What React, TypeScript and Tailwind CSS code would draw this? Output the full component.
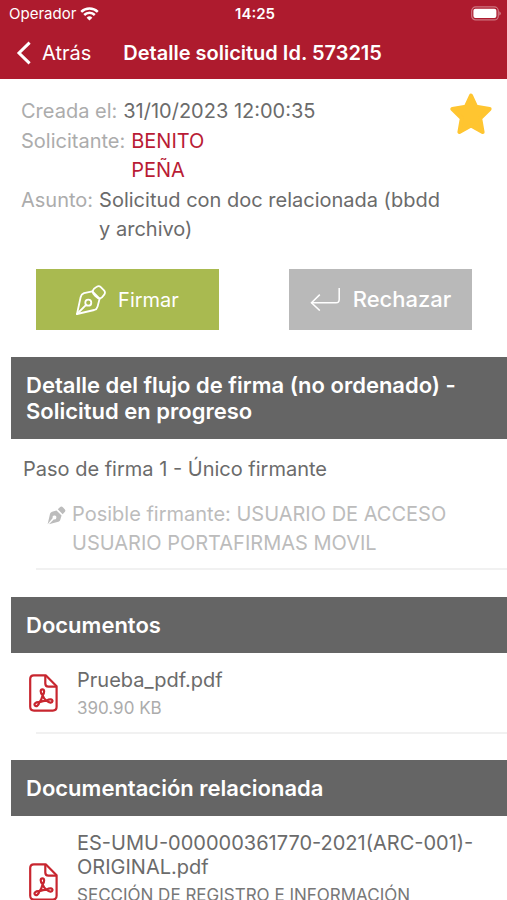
import type {ReactNode} from 'react';

const WifiIcon = () => (
  <svg width={19} height={14} viewBox="0 0 19 14" fill="none" stroke="currentColor" strokeWidth={2.5} aria-hidden="true">
    <path d="M1.2 4.9a11.8 11.8 0 0 1 16.6 0"/>
    <path d="M4.2 8a7.5 7.5 0 0 1 10.6 0"/>
    <path d="M9.5 13.6 6.6 10.7a4.1 4.1 0 0 1 5.8 0z" fill="currentColor" stroke="none"/>
  </svg>
);

const BatteryIcon = () => (
  <svg width={30} height={15} viewBox="0 0 30 15" fill="none" aria-hidden="true">
    <rect x={0.7} y={0.9} width={26.6} height={13} rx={4} stroke="#fff" strokeOpacity={0.4} strokeWidth={1.2}/>
    <rect x={2.4} y={2.7} width={23} height={9.4} rx={2} fill="#fff"/>
    <path d="M28.4 5.2a2.5 2.5 0 0 1 0 4.4z" fill="#fff" fillOpacity={0.5}/>
  </svg>
);

const BackIcon = () => (
  <svg width={16} height={24} viewBox="0 0 16 24" fill="none" stroke="currentColor" strokeWidth={3} aria-hidden="true">
    <path d="M13.6 1.6 3 12l10.6 10.4"/>
  </svg>
);

const StarIcon = () => (
  <svg width={42} height={42} viewBox="0 0 42 42" fill="#ffc530" stroke="#ffc530" strokeWidth={4} strokeLinejoin="round" aria-hidden="true">
    <path d="M21 2.6 26.2 13.8 39.6 16 30.2 25.3 32.6 39 21 32.6 9.4 39 11.8 25.3 2.4 16 15.8 13.8z"/>
  </svg>
);

const PenIcon = () => (
  <svg
    width={30}
    height={30}
    viewBox="0 0 30 30"
    fill="none"
    stroke="currentColor"
    strokeWidth={1.8}
    strokeLinejoin="round"
    strokeLinecap="round"
    aria-hidden="true"
  >
    <path d="M1 29 4.6 12.2C5 10.2 6.1 8.9 8 8.2L16.4 6.4 23.6 13.7 21.6 21.4C21.1 23.4 20.1 24.5 18.2 25z"/>
    <path d="M16.4 6.4C17 4.6 19 2.6 20.8 1.8C22.4.8 23.6 1 24.8 2.2L28 5.4C29.2 6.6 29.3 7.8 28.3 9.4C27.2 11.2 25.5 13 23.6 13.7C21 13.4 16.8 9.2 16.4 6.4z"/>
    <circle cx={12.3} cy={17.7} r={3}/>
    <path d="M1 29 10.1 19.9"/>
  </svg>
);

const PenSolidIcon = () => (
  <svg width={19} height={19} viewBox="0 0 30 30" fill="currentColor" aria-hidden="true">
    <path d="M1 29 4.6 13C5 11 6.1 9.7 8 9L15 7 23 15 21 21.6C20.5 23.4 19.5 24.4 17.8 25L3 29 11 21A3 3 0 1 0 9 19z"/>
    <path d="M17 5.3 20.4 2C21.8.6 23.6.6 25 2L28 5C29.4 6.4 29.4 8.2 28 9.6L24.7 13z"/>
  </svg>
);

const ReturnIcon = () => (
  <svg width={31} height={23} viewBox="0 0 31 23" fill="none" stroke="currentColor" strokeWidth={1.5} aria-hidden="true">
    <path d="M29.2 0V11.5C29.2 13.8 28.2 14.8 26 14.8H1.5"/>
    <path d="M9.8 6.6 1.5 14.8 9.8 22.6"/>
  </svg>
);

const PdfIcon = () => (
  <svg
    width={29}
    height={38}
    viewBox="0 0 29 38"
    fill="none"
    stroke="#c8262f"
    strokeWidth={2.2}
    strokeLinejoin="round"
    className="shrink-0"
    aria-hidden="true"
  >
    <path d="M4.8 1.3H16.7L27.6 12.2V32.8C27.6 35.4 26.4 36.6 23.8 36.6H5C2.4 36.6 1.2 35.4 1.2 32.8V5C1.2 2.4 2.4 1.3 4.8 1.3z"/>
    <path d="M16.3 1.3V9.6C16.3 11.7 17.3 12.7 19.4 12.7H27.6"/>
    <path d="M13.6 21.4C11 18.4 11.2 15.4 13.4 15.4C15.6 15.4 15.8 18.4 13.6 21.4C14.4 23.8 15.6 25.4 17.6 26.6C20.6 24.6 23.8 25 23.5 27.2C23.2 29.4 20.2 29 17.6 26.6C15 26.7 12.7 27.3 10.4 28.3C9.6 31.8 7.2 33 5.9 31.5C4.7 29.8 6.8 27.8 10.4 28.3C12 26.2 13 24 13.6 21.4z"/>
  </svg>
);

const SectionTitle = ({children}: {children: ReactNode}) => (
  <h2 className="ml-[11px] bg-[#656565] py-[15px] pr-9 pl-[15px] text-[22px] leading-[26px] font-semibold text-white">
    {children}
  </h2>
);

type DocumentItemProps = {
  name: string;
  detail: string;
  className?: string;
  detailClassName: string;
};

const DocumentItem = ({name, detail, className = '', detailClassName}: DocumentItemProps) => (
  <li>
    <a href="#documento" className={`flex items-center gap-[19px] pr-6 pl-[29px] ${className}`}>
      <PdfIcon/>
      <span className="flex min-w-0 flex-1 flex-col gap-1 self-start pt-[15px] pb-3 leading-6">
        <span>{name}</span>
        <span className={`text-[17px] leading-6 ${detailClassName}`}>{detail}</span>
      </span>
    </a>
  </li>
);

export default function App() {
  return (
    <div className="flex h-dvh flex-col overflow-hidden bg-white font-['Inter','Liberation_Sans',sans-serif] text-xl text-[#6b6b6b]">
      <header className="shrink-0 bg-[#ae1b2e] pb-px text-white">
        <div className="grid h-[27px] grid-cols-3 items-center pr-[6px] pl-[9px] text-[15px]">
          <div className="flex items-center gap-1">
            <span>Operador</span>
            <WifiIcon/>
          </div>
          <span className="text-center font-semibold">14:25</span>
          <div className="flex justify-end">
            <BatteryIcon/>
          </div>
        </div>
        <div className="flex h-[51px] items-center pl-4">
          <button type="button" className="flex items-center gap-[10px]">
            <BackIcon/>
            Atrás
          </button>
          <h1 className="ml-8 font-semibold whitespace-nowrap">Detalle solicitud Id. 573215</h1>
        </div>
      </header>

      <main className="min-h-0 flex-1 overflow-y-auto [scrollbar-width:none]">
        <div className="flex items-start justify-between pt-[14px] pr-[15px] pl-[21px]">
          <dl className="flex min-w-0 flex-1 flex-col gap-px pt-1 leading-[29px]">
            <div className="flex gap-[6px]">
              <dt className="text-[#acacac]">Creada el:</dt>
              <dd>31/10/2023 12:00:35</dd>
            </div>
            <div className="flex gap-[6px]">
              <dt className="text-[#acacac]">Solicitante:</dt>
              <dd className="w-24 text-[#b91c35]">BENITO PEÑA</dd>
            </div>
            <div className="flex gap-[6px]">
              <dt className="text-[#acacac]">Asunto:</dt>
              <dd>Solicitud con doc relacionada (bbdd y archivo)</dd>
            </div>
          </dl>
          <button type="button" aria-label="Favorita" className="shrink-0">
            <StarIcon/>
          </button>
        </div>

        <div className="mt-[25px] grid grid-cols-2 gap-[70px] pr-[35px] pl-9 text-white">
          <button type="button" className="flex h-[61px] items-center justify-center gap-3 bg-[#a9ba50]">
            <PenIcon/>
            Firmar
          </button>
          <button type="button" className="flex h-[61px] items-center justify-center gap-3 bg-[#b9b9b9] text-[22px] font-medium">
            <ReturnIcon/>
            Rechazar
          </button>
        </div>

        <section className="mt-[27px]">
          <SectionTitle>Detalle del flujo de firma (no ordenado) - Solicitud en progreso</SectionTitle>
          <p className="pt-4 pl-[23px] leading-[29px]">Paso de firma 1 - Único firmante</p>
          <div className="mt-4 ml-9 flex gap-[6px] border-b-2 border-[#f1f1f1] pr-9 pb-[10px] pl-[11px] leading-[29px] text-[#bcbcbc]">
            <span className="mt-[6px]">
              <PenSolidIcon/>
            </span>
            <p>Posible firmante: USUARIO DE ACCESO USUARIO PORTAFIRMAS MOVIL</p>
          </div>
        </section>

        <section className="mt-[27px]">
          <SectionTitle>Documentos</SectionTitle>
          <ul>
            <DocumentItem name="Prueba_pdf.pdf" detail="390.90 KB" detailClassName="text-[#acacac]"/>
          </ul>
          <div className="ml-9 border-b-2 border-[#f1f1f1]"/>
        </section>

        <section className="mt-[26px]">
          <SectionTitle>Documentación relacionada</SectionTitle>
          <ul>
            <DocumentItem
              name="ES-UMU-000000361770-2021(ARC-001)-ORIGINAL.pdf"
              detail="SECCIÓN DE REGISTRO E INFORMACIÓN"
              className="min-h-[132px]"
              detailClassName="text-[#777777]"
            />
          </ul>
        </section>
      </main>
    </div>
  );
}
